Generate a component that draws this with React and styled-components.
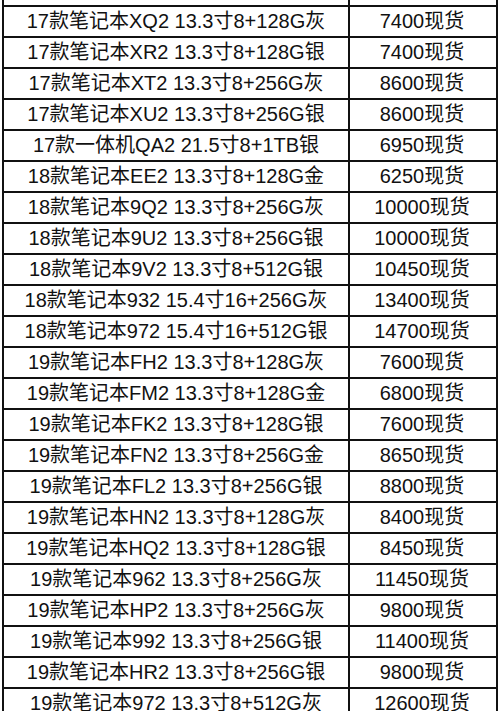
import React from 'react'
import styled, { createGlobalStyle } from 'styled-components'

const rows = [
  ['17款笔记本XQ2 13.3寸8+128G灰', '7400现货'],
  ['17款笔记本XR2 13.3寸8+128G银', '7400现货'],
  ['17款笔记本XT2 13.3寸8+256G灰', '8600现货'],
  ['17款笔记本XU2 13.3寸8+256G银', '8600现货'],
  ['17款一体机QA2 21.5寸8+1TB银', '6950现货'],
  ['18款笔记本EE2 13.3寸8+128G金', '6250现货'],
  ['18款笔记本9Q2 13.3寸8+256G灰', '10000现货'],
  ['18款笔记本9U2 13.3寸8+256G银', '10000现货'],
  ['18款笔记本9V2 13.3寸8+512G银', '10450现货'],
  ['18款笔记本932 15.4寸16+256G灰', '13400现货'],
  ['18款笔记本972 15.4寸16+512G银', '14700现货'],
  ['19款笔记本FH2 13.3寸8+128G灰', '7600现货'],
  ['19款笔记本FM2 13.3寸8+128G金', '6800现货'],
  ['19款笔记本FK2 13.3寸8+128G银', '7600现货'],
  ['19款笔记本FN2 13.3寸8+256G金', '8650现货'],
  ['19款笔记本FL2 13.3寸8+256G银', '8800现货'],
  ['19款笔记本HN2 13.3寸8+128G灰', '8400现货'],
  ['19款笔记本HQ2 13.3寸8+128G银', '8450现货'],
  ['19款笔记本962 13.3寸8+256G灰', '11450现货'],
  ['19款笔记本HP2 13.3寸8+256G灰', '9800现货'],
  ['19款笔记本992 13.3寸8+256G银', '11400现货'],
  ['19款笔记本HR2 13.3寸8+256G银', '9800现货'],
  ['19款笔记本972 13.3寸8+512G灰', '12600现货'],
]

const GlobalStyle = createGlobalStyle`
  html, body {
    margin: 0;
    padding: 0;
    background: #fff;
  }
`

const Page = styled.div`
  width: 500px;
  height: 711px;
  overflow: hidden;
  background: #fff;
  font-family: "Liberation Sans", "Noto Sans CJK SC", sans-serif;
  color: #111;
`

const Table = styled.div`
  margin-left: 2px;
  width: 496px;
  border-left: 2px solid #111;
  border-right: 2px solid #111;
  box-sizing: border-box;
`

const Row = styled.div`
  display: grid;
  grid-template-columns: 346px 144px;
  height: ${(p) => (p.$stub ? 7 : 31)}px;
  border-bottom: 2px solid #111;
  box-sizing: border-box;
`

const Cell = styled.div`
  display: flex;
  align-items: center;
  justify-content: center;
  font-size: 20px;
  line-height: 1;
  white-space: nowrap;
  padding-bottom: 2px;
  box-sizing: border-box;
  border-right: ${(p) => (p.$first ? '2px solid #111' : 'none')};
`

export default function App() {
  return (
    <Page>
      <GlobalStyle />
      <Table>
        <Row $stub>
          <Cell $first />
          <Cell />
        </Row>
        {rows.map(([name, price]) => (
          <Row key={name}>
            <Cell $first>{name}</Cell>
            <Cell>{price}</Cell>
          </Row>
        ))}
      </Table>
    </Page>
  )
}
